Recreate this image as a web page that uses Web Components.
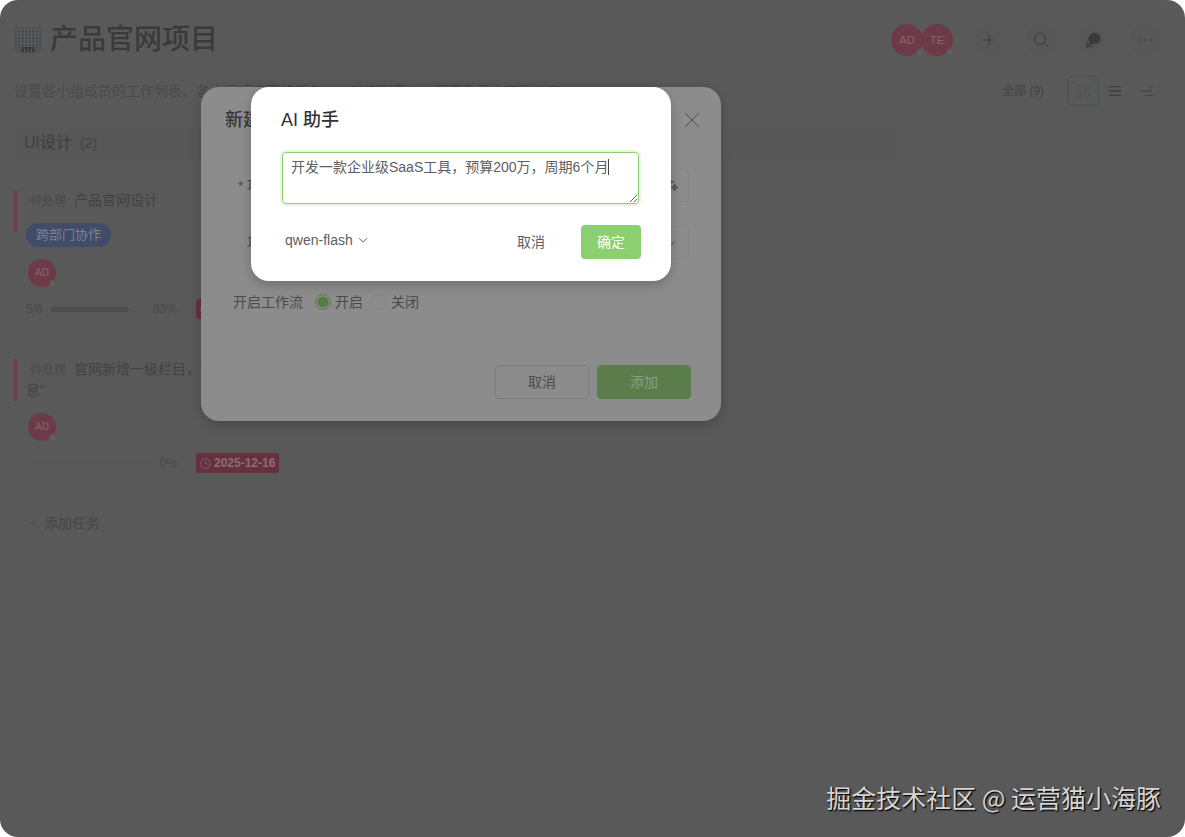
<!DOCTYPE html>
<html lang="zh-CN">
<head>
<meta charset="utf-8">
<title>产品官网项目</title>
<style>
  body {
    margin: 0;
    background: #fff;
    font: 14px/20px "Liberation Sans", "Noto Sans CJK SC", sans-serif;
  }
</style>
</head>
<body>
<project-app></project-app>

<script>
const ICONS = {
  plus: `<path d="M8 2v12M2 8h12"/>`,
  search: `<circle cx="7" cy="7" r="5.500"/><path d="M11 11 15 15"/>`,
  chat: `<g fill="currentColor" stroke="none"><ellipse cx="9.500" cy="6.500" rx="6.200" ry="5.800"/><path d="M4.500 10 3 13.500l5-1.500z"/><path d="M2.200 7.500a5.500 5.500 0 0 0 8.300 5.800A6 6 0 0 1 4.500 15L.5 15.800l1-3a5.500 5.500 0 0 1 .7-5.300z"/></g>`,
  more: `<g fill="currentColor" stroke="none"><circle cx="2.500" cy="8" r="1"/><circle cx="8" cy="8" r="1"/><circle cx="13.500" cy="8" r="1"/></g>`,
  grid: `<rect x="1.500" y="1.500" width="5" height="5" rx="1"/><rect x="9.500" y="1.500" width="5" height="5" rx="1"/><rect x="1.500" y="9.500" width="5" height="5" rx="1"/><rect x="9.500" y="9.500" width="5" height="5" rx="1"/>`,
  list: `<path stroke-width="1.500" d="M1 3h14M1 8h14M1 13h14"/>`,
  gantt: `<path d="M10 3h5M1 8h12M6 13h9"/>`,
  clock: `<circle cx="8" cy="8" r="7"/><path d="M8 4v4.500h3"/>`,
  close: `<path d="M1 1l14 14M15 1L1 15"/>`,
  down: `<path stroke-width="1.500" d="M1.500 5 8 11.500 14.500 5"/>`,
  spark: `<path stroke-width="1.500" d="M5.500 .5 6.800 4l3.500 1.500L6.800 7 5.500 10.500 4.200 7 .8 5.500 4.200 4zM12 8.500l1 2.500 2.500 1-2.500 1-1 2.500-1-2.500-2.500-1 2.500-1z"/>`,
  building: `<rect x=".5" y=".5" width="15" height="14" rx="1" fill="#4e5053" stroke="none"/><path stroke="#616467" stroke-width=".7" d="M2 1v11M4 1v11M6 1v11M8 1v11M10 1v11M12 1v11M14 1v11"/><path stroke="#46484b" stroke-width=".4" d="M1 3h14M1 5h14M1 7h14M1 9h14M1 11h14"/><rect x=".5" y="12.500" width="15" height="2.500" fill="#505356" stroke="none"/><rect x="4.500" y="12" width="7" height="3" fill="#36383b" stroke="none"/><path stroke="#6a6a6a" stroke-width=".5" d="M6 13v2M8 13v2M10 13v2"/>`,
};

class UiIcon extends HTMLElement {
  constructor() {
    super();
    this.attachShadow({ mode: "open" });
  }

  connectedCallback() {
    this.shadowRoot.innerHTML = /* html */`
    <style>
      :host { display: inline-flex; width: var(--size, 14px); height: var(--size, 14px); flex: none; }
      svg { width: 100%; height: 100%; }
    </style>
    <svg viewBox="0 0 16 16" fill="none" stroke="currentColor" aria-hidden="true">${ICONS[this.getAttribute("name")]}</svg>
    `;
  }
}

class UserAvatar extends HTMLElement {
  constructor() {
    super();
    this.attachShadow({ mode: "open" });
  }

  connectedCallback() {
    this.shadowRoot.innerHTML = /* html */`
    <style>
      :host {
        display: flex;
        position: relative;
        width: var(--size, 28px);
        height: var(--size, 28px);
        border-radius: 50%;
        background: #6d3a47;
        color: #87656e;
        font-size: var(--text, 10px);
        line-height: var(--size, 28px);
      }
      .name { flex: 1; text-align: center; }
      .dot {
        position: absolute;
        right: 0;
        bottom: 0;
        width: 5px;
        height: 5px;
        border: 1px solid #595959;
        border-radius: 50%;
        background: #665d5a;
      }
    </style>
    <span class="name"><slot></slot></span><span class="dot"></span>
    `;
  }
}

class TaskCard extends HTMLElement {
  constructor() {
    super();
    this.attachShadow({ mode: "open" });
  }

  connectedCallback() {
    const steps = this.getAttribute("steps");
    const percent = this.getAttribute("percent");
    const tag = this.getAttribute("tag");
    this.shadowRoot.innerHTML = /* html */`
    <style>
      :host {
        display: flex;
        flex-direction: column;
        align-items: flex-start;
        gap: 12px;
        padding-left: 12px;
        color: #424242;
        background: linear-gradient(#6d3f4a, #6d3f4a) 0 0 / 3px 42px no-repeat;
      }
      .title { line-height: 21px; }
      .status { margin: 0 8px 0 4px; font-size: 12px; line-height: 12px; color: #494949; }
      .tag {
        padding: 0 10px;
        border-radius: 12px;
        line-height: 24px;
        font-size: 13px;
        background: #414c68;
        color: #7c8292;
      }
      user-avatar { margin-left: 2px; }
      .foot {
        display: flex;
        align-items: center;
        align-self: stretch;
        font-size: 12px;
        color: #484848;
      }
      .progress { display: flex; align-items: center; gap: 8px; width: 151px; }
      .track { flex: 1; display: flex; height: 5px; }
      .fill { width: 83%; border-radius: 3px; background: #474e4b; }
      .empty .track { height: 1px; margin-left: 8px; background: #545454; }
      .empty .fill { width: 0; }
      .date {
        display: flex;
        align-items: center;
        gap: 3px;
        margin-left: 19px;
        padding: 0 4px;
        border-radius: 3px;
        background: #66313f;
        color: #8a6f76;
        font-weight: 700;
        --size: 11px;
      }
    </style>
    <div class="title"><span class="status">待处理</span><slot></slot></div>
    ${tag ? `<span class="tag">${tag}</span>` : ""}
    <user-avatar>AD</user-avatar>
    <div class="foot">
      <div class="progress ${steps ? "" : "empty"}">
        ${steps ? `<span>${steps}</span>` : ""}
        <div class="track"><div class="fill"></div></div>
        <span>${percent}</span>
      </div>
      <time class="date"><ui-icon name="clock"></ui-icon>2025-12-16</time>
    </div>
    `;
  }
}

class ProjectBoard extends HTMLElement {
  constructor() {
    super();
    this.attachShadow({ mode: "open" });
  }

  connectedCallback() {
    this.shadowRoot.innerHTML = /* html */`
    <style>
      :host { display: block; color: #414141; }
      h1, h2, p { margin: 0; }
      header {
        display: flex;
        align-items: center;
        justify-content: space-between;
        padding: 20px 24px 0 14px;
      }
      h1 {
        display: flex;
        align-items: center;
        gap: 8px;
        font-size: 28px;
        line-height: 40px;
        font-weight: 500;
        color: #3a3a3a;
        --size: 28px;
      }
      .tools { display: flex; align-items: center; gap: 20px; }
      .people { display: flex; --size: 32px; --text: 11px; }
      .people user-avatar + user-avatar { margin-left: -2px; }
      button {
        display: grid;
        place-items: center;
        padding: 0;
        border: 0;
        background: none;
        color: inherit;
        font: inherit;
      }
      .tools button {
        width: 32px;
        height: 32px;
        border-radius: 50%;
        background: #575757;
        color: #3b3b3b;
        --size: 16px;
      }
      .sub {
        display: flex;
        align-items: center;
        justify-content: space-between;
        padding: 16px 22px 0 14px;
        color: #4a4a4a;
      }
      .views { display: flex; align-items: center; }
      .views .all { margin-right: 23px; font-size: 12px; color: #424242; }
      .views .view { width: 32px; height: 30px; color: #3d3d3d; }
      .views .active { border: 1px solid #42564d; border-radius: 5px; color: #47544e; }
      .board {
        display: grid;
        grid-template-columns: 296px 296px 296px;
        padding: 21px 0 0 14px;
      }
      h2 {
        display: flex;
        gap: 8px;
        min-height: 32px;
        padding-left: 10px;
        font-size: 16px;
        line-height: 32px;
        font-weight: 500;
        background: #575757;
      }
      h2 small { font-size: 14px; font-weight: 400; }
      .tasks { display: flex; flex-direction: column; gap: 40px; padding: 31px 20px 0 0; }
      .add { display: flex; gap: 6px; align-items: center; margin-left: 14px; color: #464646; --size: 10px; }
    </style>
    <header>
      <h1><ui-icon name="building"></ui-icon>产品官网项目</h1>
      <div class="tools">
        <div class="people"><user-avatar>AD</user-avatar><user-avatar>TE</user-avatar></div>
        <button aria-label="添加"><ui-icon name="plus"></ui-icon></button>
        <button aria-label="搜索"><ui-icon name="search"></ui-icon></button>
        <button aria-label="聊天"><ui-icon name="chat"></ui-icon></button>
        <button aria-label="更多"><ui-icon name="more"></ui-icon></button>
      </div>
    </header>
    <div class="sub">
      <p>设置各小组成员的工作列表、各小组将自己的任务放入对应列表中，便于负责人查看进度。</p>
      <div class="views">
        <button class="all">全部 (9)</button>
        <button class="view active" aria-label="看板"><ui-icon name="grid"></ui-icon></button>
        <button class="view" aria-label="列表"><ui-icon name="list"></ui-icon></button>
        <button class="view" aria-label="甘特图"><ui-icon name="gantt"></ui-icon></button>
      </div>
    </div>
    <div class="board">
      <section>
        <h2>UI设计 <small>(2)</small></h2>
        <div class="tasks">
          <task-card tag="跨部门协作" steps="5/6" percent="83%">产品官网设计</task-card>
          <task-card percent="0%">官网新增一级栏目，命名为“最新消息”</task-card>
          <button class="add"><ui-icon name="plus"></ui-icon>添加任务</button>
        </div>
      </section>
      <section><h2></h2></section>
      <section><h2></h2></section>
    </div>
    `;
  }
}

class ModalCard extends HTMLElement {
  constructor() {
    super();
    this.attachShadow({ mode: "open" });
  }

  connectedCallback() {
    this.setAttribute("role", "dialog");
    this.shadowRoot.innerHTML = /* html */`
    <style>
      :host {
        display: block;
        box-sizing: border-box;
        border-radius: 18px;
        background: var(--card, #fff);
        box-shadow: 0 4px 12px #0003;
      }
      header { display: flex; justify-content: space-between; align-items: center; }
      h3 { margin: 0; font-size: 18px; line-height: 24px; font-weight: 500; color: var(--heading, #333); }
      footer { display: flex; align-items: center; }
    </style>
    <header><h3><slot name="title"></slot></h3><slot name="close"></slot></header>
    <slot></slot>
    <footer><slot name="footer"></slot></footer>
    `;
  }
}

class ProjectDialog extends HTMLElement {
  constructor() {
    super();
    this.attachShadow({ mode: "open" });
  }

  connectedCallback() {
    this.shadowRoot.innerHTML = /* html */`
    <style>
      :host { display: block; width: 520px; max-width: 100%; color: #4b4b4b; }
      modal-card { --card: #8c8c8c; --heading: #363636; padding: 21px 30px 22px 24px; }
      button, input, select { font: inherit; color: inherit; box-sizing: border-box; }
      .close { display: grid; padding: 0; border: 0; background: none; color: #505050; margin-right: -9px; --size: 16px; }
      .form {
        display: grid;
        grid-template-columns: 78px 1fr;
        column-gap: 12px;
        row-gap: 24px;
        align-items: center;
        padding: 37px 2px 0 0;
      }
      .name { text-align: right; }
      .field {
        display: grid;
        grid-template-columns: 1fr 34px;
        grid-template-rows: 31px;
        border: 1px solid #858585;
        border-radius: 4px;
      }
      .field > input, .field > select {
        grid-area: 1 / 1 / 2 / 3;
        min-width: 0;
        padding: 0 8px;
        border: 0;
        background: none;
        appearance: none;
      }
      .field > button, .field > ui-icon { grid-area: 1 / 2; place-self: center; padding: 0; border: 0; background: none; }
      .field > button { --size: 14px; }
      .field > ui-icon { --size: 10px; }
      .radios { display: flex; gap: 8px; height: 38px; align-items: center; }
      .radios label { display: flex; gap: 4px; align-items: center; }
      .radios input {
        width: 16px;
        height: 16px;
        margin: 0;
        appearance: none;
        border: 1px solid #828282;
        border-radius: 50%;
      }
      .radios input:checked { border-color: #557c46; background: radial-gradient(#557c46 5px, transparent 6px); }
      .action {
        width: 94px;
        height: 34px;
        border: 1px solid #7c7c7c;
        border-radius: 4px;
        background: none;
      }
      .cancel { margin: 44px 8px 0 auto; }
      .ok { margin-top: 44px; border-color: #5a7d4b; background: #5a7d4b; color: #8b9f84; }
    </style>
    <modal-card aria-label="新建项目">
      <span slot="title">新建项目</span>
      <button class="close" slot="close" aria-label="关闭"><ui-icon name="close"></ui-icon></button>
      <div class="form">
        <label class="name" for="name">* 项目名称</label>
        <div class="field"><input id="name"><button aria-label="AI"><ui-icon name="spark"></ui-icon></button></div>
        <label class="name" for="template">项目模板</label>
        <div class="field"><select id="template"></select><ui-icon name="down"></ui-icon></div>
        <span class="name">开启工作流</span>
        <div class="radios">
          <label><input type="radio" name="flow" checked>开启</label>
          <label><input type="radio" name="flow">关闭</label>
        </div>
      </div>
      <button class="action cancel" slot="footer">取消</button>
      <button class="action ok" slot="footer">添加</button>
    </modal-card>
    `;
  }
}

class AiDialog extends HTMLElement {
  constructor() {
    super();
    this.attachShadow({ mode: "open" });
  }

  connectedCallback() {
    this.shadowRoot.innerHTML = /* html */`
    <style>
      :host { display: block; width: 420px; max-width: 100%; color: #606060; }
      modal-card { padding: 21px 30px 22px; }
      button, textarea, select { font: inherit; color: inherit; box-sizing: border-box; }
      textarea {
        display: block;
        width: calc(100% - 3px);
        height: 52px;
        margin: 20px 2px 21px 1px;
        padding: 4px 8px;
        border: 1px solid #8bcf70;
        border-radius: 4px;
        outline: 0;
        box-shadow: 0 0 0 2px #8bcf7033;
        resize: vertical;
        caret-color: transparent;
        background: linear-gradient(#444, #444) 325px 6px / 1px 16px no-repeat;
      }
      .model { display: grid; align-items: center; margin: 0 auto 4px 4px; --size: 10px; }
      .model select {
        grid-area: 1 / 1;
        padding: 0 15px 0 0;
        border: 0;
        background: none;
        appearance: none;
      }
      .model ui-icon { grid-area: 1 / 1; justify-self: end; pointer-events: none; }
      .action { height: 34px; padding: 0 16px; border: 0; border-radius: 4px; background: none; }
      .ok { margin-left: 20px; background: #8bcf70; color: #fff; }
    </style>
    <modal-card aria-label="AI 助手">
      <span slot="title">AI 助手</span>
      <textarea aria-label="项目描述" spellcheck="false">开发一款企业级SaaS工具，预算200万，周期6个月</textarea>
      <div class="model" slot="footer">
        <select aria-label="模型"><option>qwen-flash</option></select>
        <ui-icon name="down"></ui-icon>
      </div>
      <button class="action" slot="footer">取消</button>
      <button class="action ok" slot="footer">确定</button>
    </modal-card>
    `;
  }
}

class ProjectApp extends HTMLElement {
  constructor() {
    super();
    this.attachShadow({ mode: "open" });
  }

  connectedCallback() {
    this.shadowRoot.innerHTML = /* html */`
    <style>
      :host {
        display: block;
        position: relative;
        min-height: 100vh;
        border-radius: 18px;
        overflow: hidden;
        background: #595959;
      }
      /* both dialogs share one cell so the assistant opens over the form */
      .layer {
        position: absolute;
        inset: 0;
        display: grid;
        justify-items: center;
        align-items: start;
        padding: 87px 263px 0 0;
      }
      .layer > * { grid-area: 1 / 1; }
      .mark {
        position: absolute;
        right: 24px;
        bottom: 22px;
        font: 25px/36px "Noto Sans CJK SC", sans-serif;
        color: #d6d6d6;
        text-shadow: 1px 1px 1px #000, 1px 1px 2px #0008;
      }
    </style>
    <project-board></project-board>
    <div class="layer">
      <project-dialog></project-dialog>
      <ai-dialog></ai-dialog>
    </div>
    <div class="mark">掘金技术社区 @ 运营猫小海豚</div>
    `;
  }
}

customElements.define("ui-icon", UiIcon);
customElements.define("user-avatar", UserAvatar);
customElements.define("task-card", TaskCard);
customElements.define("modal-card", ModalCard);
customElements.define("project-board", ProjectBoard);
customElements.define("project-dialog", ProjectDialog);
customElements.define("ai-dialog", AiDialog);
customElements.define("project-app", ProjectApp);
</script>
</body>
</html>
